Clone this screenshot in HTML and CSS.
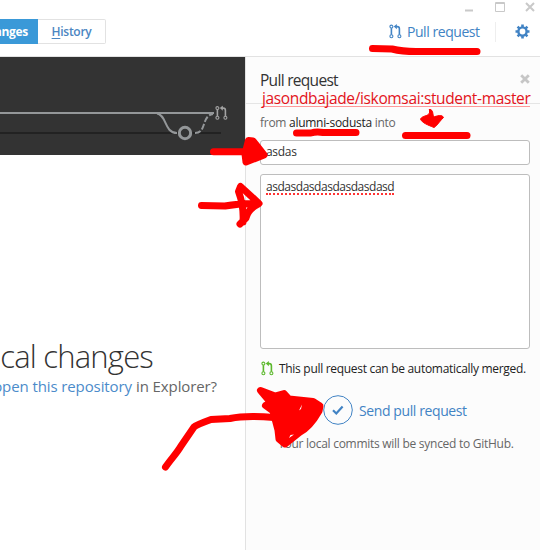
FILE: index.html
```
<!DOCTYPE html>
<html lang="en">
<head>
<meta charset="utf-8">
<title>Pull request</title>
<link rel="stylesheet" href="styles.css">
</head>
<body>
<svg class="defs" aria-hidden="true">
  <symbol id="pr" viewBox="0 0 13 15">
    <g fill="none" stroke="currentColor">
      <circle cx="2.4" cy="2.6" r="1.5" stroke-width="1.1"/>
      <circle cx="2.4" cy="12.3" r="1.5" stroke-width="1.1"/>
      <circle cx="10.4" cy="12.3" r="1.5" stroke-width="1.1"/>
      <path d="M2.4 4.3v6.4M10.4 10.7V4.8Q10.4 2.6 8.2 2.6H7" stroke-width="1.6"/>
    </g>
    <path d="M4.8 2.6L7.8 0v5.2z" fill="currentColor"/>
  </symbol>
</svg>
<div class="window">
  <header class="toolbar">
    <nav class="tabs">
      <a class="tab active"><span>Changes</span></a>
      <a class="tab"><span><u>H</u>istory</span></a>
    </nav>
    <div class="tools">
      <div class="controls">
        <svg width="72" height="12" viewBox="0 0 72 12" fill="none" stroke="#c9c9c9">
          <path d="M0 9.500h8" stroke-width="2"/>
          <path d="M30.500 1.500h9v9h-9zM30 2.500h10"/>
          <path d="M61 2l8 8M69 2l-8 8" stroke-width="2"/>
        </svg>
      </div>
      <div class="actions">
        <svg class="icon" width="13" height="15"><use href="#pr"/></svg>
        <a class="pull-link">Pull request</a>
        <i class="divider"></i>
        <svg class="gear" width="15" height="15" viewBox="-7.5 -7.5 15 15">
          <circle r="4.1" fill="none" stroke="currentColor" stroke-width="2.4"/>
          <path d="M0-7V-4.5M0 7V4.5M-7 0H-4.5M7 0H4.5M-4.9-4.9L-3.2-3.2M4.9 4.9L3.2 3.2M-4.9 4.9L-3.2 3.2M4.9-4.9L3.2-3.2" stroke="currentColor" stroke-width="2.6"/>
        </svg>
      </div>
    </div>
  </header>
  <div class="content">
    <main class="main">
      <svg class="graph" width="245" height="98" viewBox="0 57 245 98" fill="none">
        <path d="M0 133h221" stroke="#222" stroke-width="2"/>
        <g stroke="#949799" stroke-width="2">
          <path d="M0 113h214"/>
          <path d="M157 113.500C167 115 164 133 177 133"/>
          <path d="M195 133C207 133 201 116 213 114" stroke-dasharray="6 2"/>
          <circle cx="185" cy="133" r="5.700" fill="#333" stroke-width="3"/>
        </g>
        <g color="#a3a3a3"><use href="#pr" x="215" y="105.500" width="13" height="15"/></g>
      </svg>
      <section class="empty">
        <h1>No local changes</h1>
        <p><a>open this repository</a> <span>in Explorer?</span></p>
      </section>
    </main>
    <aside class="side">
      <div class="side-head"><h2>Pull request</h2>
        <svg width="10" height="10" viewBox="0 0 10 10" stroke="#c6c6c6" stroke-width="2.800"><path d="M1.200 1.200l7.600 7.600M8.800 1.200L1.200 8.800"/></svg>
      </div>
      <p class="branches">from <b>alumni-sodusta</b> into</p>
      <div class="field title"><span>asdas</span></div>
      <div class="field body"><span class="misspelt">asdasdasdasdasdasdasd</span></div>
      <p class="merge"><svg class="icon" width="13" height="15"><use href="#pr"/></svg><span>This pull request can be automatically merged.</span></p>
      <a class="send">
        <svg width="30" height="30" viewBox="0 0 30 30" fill="none" stroke="currentColor"><circle cx="15" cy="15" r="14.300"/><path d="M10 15.300l3.300 3.200 6.300-6.900" stroke-width="2.200"/></svg>
        <span>Send pull request</span>
      </a>
      <p class="sync">Your local commits will be synced to GitHub.</p>
    </aside>
  </div>
  <div class="note">jasondbajade/iskomsai:student-master</div>
  <svg class="marks" width="540" height="550" viewBox="0 0 540 550" fill="none" stroke="#f00" stroke-width="7" stroke-linecap="round" stroke-linejoin="round">
    <path d="M372.500 48.500L392 49Q402 51.500 416 51.500H477"/>
    <path d="M296.500 133H311Q316 131.500 323 132.500H356"/>
    <path d="M405.500 135.500H467"/>
    <path d="M429.500 109.500V113C427 117 423 115 420.500 119C422 123 428 125 434 127.500C438 125 438 123 443.500 117.500C442 114 437 116 433.500 117L432.500 111.500Q431 108.500 429.500 109.500z" fill="#f00" stroke-width="1"/>
    <path d="M213.500 151.700H247M248.500 140.500L253 141L259 148.500L264 155L246 162L245 154z" fill="#f00"/>
    <path d="M201.500 205.500L225 206Q240 203 258 203.500M240.500 186.500L246 191.500Q253 198 259 203.500Q248 209 246 218L240 224M240.500 186.500L238.500 191.500Q244 206 243 222"/>
    <path d="M165.500 467C171 459 177 453 181 446L194 427Q196 425 211 419.500L230 418.500Q246 415 274 417.500"/>
    <path d="M260.500 390.500L275 396L284 393.500L289 399L313 401.500L320 406L319 411C315 418 308 428 300 432L285 444L279 439L278 430L273 411L265.500 405.500L271 403z" fill="#f00"/>
    <path d="M302 404.500l-3 6 2-1.500zM289 438l5-3.500-3.500.5z" fill="#fff" stroke="none"/>
  </svg>
</div>
</body>
</html>
```
FILE: styles.css
```
* { box-sizing: border-box; }
body { margin: 0; background: #fff; color: #333; font-family: "Open Sans", "Noto Sans", sans-serif; font-size: 12px; }
h1, h2, p { margin: 0; font-weight: 400; }
svg { flex: none; display: block; }
.defs { width: 0; height: 0; position: absolute; }
.window { position: relative; width: 540px; height: 550px; overflow: hidden; display: flex; flex-direction: column; white-space: nowrap; }
.toolbar { height: 57px; flex: none; display: flex; justify-content: space-between; border-bottom: 1px solid #e2e2e2; }
.tabs { display: flex; height: 25px; margin-top: 19px; width: 106px; line-height: 25px; font-weight: 600; }
.tab { color: #4b86c2; width: 68px; border: 1px solid #e2e2e2; border-left: 0; border-radius: 0 2px 2px 0; line-height: 23px; text-align: center; letter-spacing: -.3px; }
.tab u { text-underline-offset: 2px; }
.tab.active { width: 38px; background: #3a99d8; color: #fff; border: 0; border-radius: 0; line-height: 25px; display: flex; justify-content: flex-end; padding-right: 10px; overflow: hidden; font-weight: 700; }
.tools { width: 151px; display: flex; flex-direction: column; }
.controls { height: 19px; padding: 1px 0 0 76px; }
.actions { display: flex; align-items: center; height: 25px; color: #4183c4; }
.pull-link { margin-left: 5px; width: 74px; font-size: 14px; letter-spacing: -.45px; }
.divider { width: 1px; height: 20px; background: #eee; margin: 0 20px 0 14px; }
.gear { margin-left: -1px; }
.content { flex: 1; display: flex; }
.main { width: 245px; }
.graph { background: #333; }
.empty { margin-top: 181px; }
.empty h1 { width: 153px; display: flex; justify-content: flex-end; font-size: 31px; font-weight: 300; line-height: 40px; letter-spacing: -.8px; }
.empty p { width: 217px; display: flex; justify-content: flex-end; gap: 4px; color: #666; font-size: 15px; line-height: 20px; letter-spacing: -.1px; }
.empty a { color: #4b8bca; }
.side { flex: 1; background: #fcfcfc; border-left: 1px solid #e2e2e2; display: flex; flex-direction: column; }
.side-head { height: 47px; border-bottom: 1px solid #e5e5e5; display: flex; justify-content: space-between; padding: 12px 10px 0 14px; }
.side-head h2 { font-size: 15.5px; line-height: 22px; letter-spacing: -.7px; }
.side-head svg { margin-top: 5px; }
.branches { margin: 10px 0 0 14px; height: 18px; line-height: 18px; color: #666; letter-spacing: -.28px; }
.branches b { color: #222; font-weight: 400; }
.field { background: #fff; border: 1px solid #bdbdbd; border-radius: 3px; margin-left: 14px; width: 270px; padding: 2px 5px; line-height: 18px; letter-spacing: -.3px; }
.title { height: 25px; margin-top: 8px; }
.body { height: 175px; margin-top: 9px; letter-spacing: -.47px; }
.misspelt { border-bottom: 2px dotted #f33; display: inline-block; line-height: 14px; margin-top: 3px; height: 15px; }
.merge { display: flex; align-items: center; height: 18px; margin: 10px 0 0 15px; gap: 5px; color: #222; letter-spacing: -.3px; }
.merge .icon { color: #5cb82c; }
.send { display: flex; align-items: center; gap: 6px; margin: 18px 0 0 77px; color: #4183c4; font-size: 14px; letter-spacing: -.4px; }
.sync { color: #666; margin: 10px 0 0 32px; line-height: 18px; letter-spacing: -.27px; }
.note { position: absolute; left: 262px; top: 91px; color: #e3131b; font-size: 15.5px; line-height: 15px; height: 16px; letter-spacing: -.36px; border-bottom: 1px solid #f99; }
.marks { position: absolute; left: 0; top: 0; }
```
